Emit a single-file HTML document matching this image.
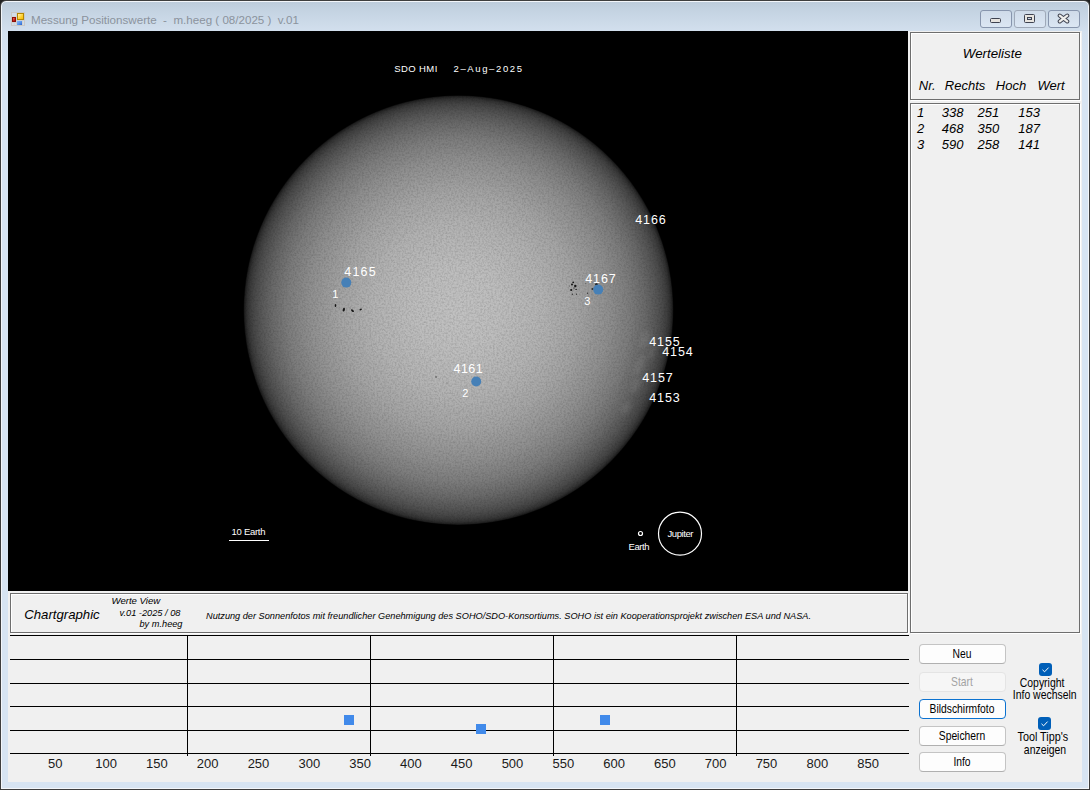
<!DOCTYPE html>
<html><head><meta charset="utf-8">
<style>
*{margin:0;padding:0;box-sizing:border-box}
html,body{width:1090px;height:790px;overflow:hidden;background:#222}
body{position:relative;font-family:"Liberation Sans",sans-serif}
.a{position:absolute}
#win{left:0;top:0;width:1090px;height:790px;background:linear-gradient(#bccbda 0,#c3d2e1 8px,#d3e0ee 31px,#d7e4f2 60px,#d7e4f2);border:1px solid #3e3e3e;border-radius:6px 6px 0 0;box-shadow:inset 0 0 0 1px #f3f6fa}
#tbar{left:0;top:0;width:1090px;height:31px;background:linear-gradient(#c3d2e2,#d9e5f2)}
#client{left:8px;top:31px;width:1074px;height:751px;background:#f0f0f0}
#img{left:8px;top:31px;width:900px;height:560px;background:#000;overflow:hidden}
.etch{border:1px solid #6e6e6e;box-shadow:1px 1px 0 #fff, inset 1px 1px 0 #fff}
.hl{height:2px;background:#000}
.vl{width:2px;background:#000}
.btn{border:1px solid #bcbcbc;border-radius:4px;background:#fdfdfd;font-size:12px;text-align:center;color:#000}
.wb{border:1px solid #8795ad;border-radius:3px;background:linear-gradient(#cfdbe9,#dbe6f3)}
.lbl{font-size:13px;color:#1e1e1e}
.sunt{color:#fff;font-size:11px;line-height:11px;white-space:nowrap}
.mono{font-family:"Liberation Mono",monospace;color:#fff;white-space:nowrap}
</style></head><body>
<div id="win" class="a"></div>
<!-- app icon -->
<svg class="a" style="left:11px;top:12px" width="14" height="14" viewBox="0 0 14 14">
<defs><linearGradient id="ig" x1="0" y1="0" x2="1" y2="1"><stop offset="0" stop-color="#fff6c8"/><stop offset="0.6" stop-color="#ffd02a"/><stop offset="1" stop-color="#f2b400"/></linearGradient>
<linearGradient id="ib" x1="0" y1="0" x2="1" y2="1"><stop offset="0" stop-color="#8ab8f4"/><stop offset="0.5" stop-color="#5c98ee"/><stop offset="1" stop-color="#2a62c8"/></linearGradient>
<linearGradient id="ir" x1="0" y1="0" x2="1" y2="1"><stop offset="0" stop-color="#f59090"/><stop offset="0.5" stop-color="#d82a20"/><stop offset="1" stop-color="#8a0a06"/></linearGradient></defs>
<rect x="0.5" y="0.5" width="13" height="13" fill="#d2dde9" stroke="#c9c8c6"/>
<path d="M5.5 0.5 V13.5 M0.5 5 H5.5 M0.5 10.5 H5.5 M3.2 10.5 V13.5 M11.5 8 V13.5 M5.5 8.5 H13.5" stroke="#cfcecb" stroke-width="0.8" fill="none"/>
<rect x="6.5" y="1.5" width="6" height="6" fill="url(#ig)" stroke="#b48700"/>
<rect x="1.5" y="5.5" width="3" height="4" fill="url(#ir)" stroke="#8e1008"/>
<rect x="6" y="9" width="5" height="4" fill="url(#ib)"/>
</svg>
<!-- window buttons -->
<div class="a wb" style="left:980px;top:10px;width:32px;height:18px"></div>
<div class="a wb" style="left:1014px;top:10px;width:32px;height:18px;border-color:#9fa9b8"></div>
<div class="a wb" style="left:1048px;top:10px;width:32px;height:18px"></div>
<div class="a" style="left:990px;top:18px;width:11px;height:5px;border:1px solid #3e4250;border-radius:1.5px;background:#e6e3df"></div>
<div class="a" style="left:1024px;top:14px;width:11px;height:9px;border:1px solid #3e4250;border-radius:1.5px;background:#e8e5e0"></div>
<div class="a" style="left:1027px;top:17px;width:5px;height:3px;border:1px solid #3e4250;background:#c9d6e6"></div>
<svg class="a" style="left:1057px;top:13px" width="13" height="11" viewBox="0 0 13 11"><path d="M2.8 2.6 L10.2 8.4 M10.2 2.6 L2.8 8.4" stroke="#3e4250" stroke-width="4.2" stroke-linecap="round"/><path d="M2.8 2.6 L10.2 8.4 M10.2 2.6 L2.8 8.4" stroke="#eeedeb" stroke-width="2.3" stroke-linecap="round"/></svg>

<div id="client" class="a"></div>
<div id="img" class="a">
<svg class="a" style="left:0;top:0" width="900" height="560" viewBox="0 0 900 560">
<defs>
<radialGradient id="ld" cx="450.5" cy="279.2" r="214.8" gradientUnits="userSpaceOnUse">
<stop offset="0" stop-color="#c1c1c1"/>
<stop offset="0.2" stop-color="#bdbdbd"/>
<stop offset="0.4" stop-color="#b2b2b2"/>
<stop offset="0.55" stop-color="#a4a4a4"/>
<stop offset="0.7" stop-color="#8f8f8f"/>
<stop offset="0.8" stop-color="#7c7c7c"/>
<stop offset="0.87" stop-color="#696969"/>
<stop offset="0.92" stop-color="#575757"/>
<stop offset="0.95" stop-color="#4a4a4a"/>
<stop offset="0.97" stop-color="#3e3e3e"/>
<stop offset="0.985" stop-color="#313131"/>
<stop offset="0.995" stop-color="#202020"/>
<stop offset="1.0" stop-color="#0e0e0e"/>
</radialGradient>
<filter id="nz" x="0" y="0" width="100%" height="100%">
<feTurbulence type="fractalNoise" baseFrequency="0.55" numOctaves="2" seed="3" result="t"/>
<feColorMatrix in="t" type="matrix" values="0 0 0 0 0  0 0 0 0 0  0 0 0 0 0  0.8 0 0 0 -0.3" result="d"/>
<feComposite in="d" in2="SourceGraphic" operator="in"/>
</filter>
<filter id="bl" x="-50%" y="-50%" width="200%" height="200%"><feGaussianBlur stdDeviation="2"/></filter>
</defs>
<circle cx="450.5" cy="279.2" r="214.8" fill="url(#ld)"/>
<circle cx="450.5" cy="279.2" r="214.3" fill="#000" filter="url(#nz)" opacity="0.35"/>
<g fill="#fff" filter="url(#bl)" opacity="0.07"><ellipse cx="637.0" cy="309.0" rx="5" ry="10" transform="rotate(20 637.0 309.0)"/><ellipse cx="632.0" cy="334.0" rx="4" ry="12" transform="rotate(25 632.0 334.0)"/><ellipse cx="644.0" cy="321.0" rx="3" ry="8" transform="rotate(15 644.0 321.0)"/><ellipse cx="628.0" cy="354.0" rx="4" ry="9" transform="rotate(30 628.0 354.0)"/><ellipse cx="618.0" cy="377.0" rx="4" ry="7" transform="rotate(35 618.0 377.0)"/></g>
<!-- sunspots -->
<g fill="#151515">
<ellipse cx="327.5" cy="274.5" rx="0.8" ry="1.6" transform="rotate(0 327.5 274.5)"/>
<ellipse cx="335.8" cy="278.7" rx="1.1" ry="1.9" transform="rotate(15 335.8 278.7)"/>
<ellipse cx="344.5" cy="279.7" rx="1.8" ry="0.9" transform="rotate(40 344.5 279.7)"/>
<ellipse cx="352.7" cy="278.5" rx="1.2" ry="0.8" transform="rotate(-20 352.7 278.5)"/>
<circle cx="565.2" cy="251.3" r="0.9"/>
<circle cx="567.3" cy="255.0" r="1.2"/>
<circle cx="564.0" cy="253.4" r="1"/>
<circle cx="563.2" cy="259.0" r="1.1"/>
<circle cx="568.1" cy="258.4" r="0.7"/>
<circle cx="564.4" cy="263.3" r="0.7" opacity="0.7"/>
<circle cx="568.5" cy="263.3" r="0.7" opacity="0.7"/>
<circle cx="579.5" cy="262.3" r="0.7" opacity="0.7"/>
<circle cx="577.8" cy="252.6" r="0.6" opacity="0.5"/>
<circle cx="566.0" cy="257.0" r="0.8" opacity="0.6"/>
<circle cx="561.5" cy="255.0" r="0.6" opacity="0.5"/>
<circle cx="588.5" cy="253.5" r="1.3"/>
<circle cx="584.5" cy="258.0" r="1.1" opacity="0.8"/>
<circle cx="428.0" cy="346.0" r="0.7" opacity="0.8"/>
<circle cx="439.0" cy="352.0" r="0.5" opacity="0.6"/>
</g>
<!-- markers -->
<g fill="#4680b7">
<circle cx="338.3" cy="251.6" r="5"/>
<circle cx="590.2" cy="258.6" r="5"/>
<circle cx="468.2" cy="350.5" r="5"/>
</g>
<!-- limb labels & scale -->
<g fill="none" stroke="#fff" stroke-width="1.2">
<circle cx="672" cy="502.7" r="21.5"/>
<circle cx="632.5" cy="502.5" r="2"/>
<line x1="221" y1="509.5" x2="261" y2="509.5"/>
</g>
<g id="suntxt" fill="#fff" font-family="Liberation Sans, sans-serif">
<text x="336.2" y="245.0" font-size="12.5" textLength="31.5" lengthAdjust="spacing">4165</text>
<text x="324.2" y="267.0" font-size="11">1</text>
<text x="577.2" y="252.0" font-size="12.5" textLength="30.5" lengthAdjust="spacing">4167</text>
<text x="576.2" y="274.0" font-size="11">3</text>
<text x="627.2" y="193.0" font-size="12.5" textLength="30.5" lengthAdjust="spacing">4166</text>
<text x="641.2" y="315.0" font-size="12.5" textLength="30.5" lengthAdjust="spacing">4155</text>
<text x="654.2" y="325.0" font-size="12.5" textLength="30.5" lengthAdjust="spacing">4154</text>
<text x="634.2" y="351.0" font-size="12.5" textLength="30.5" lengthAdjust="spacing">4157</text>
<text x="641.2" y="371.0" font-size="12.5" textLength="30.5" lengthAdjust="spacing">4153</text>
<text x="445.6" y="342.0" font-size="12.5" textLength="29" lengthAdjust="spacing">4161</text>
<text x="454.2" y="366.0" font-size="11">2</text>
</g>
<g id="idltxt" fill="#fff" font-family="Liberation Sans, sans-serif" font-size="9.5">
<text x="386.3" y="41" font-size="9.5" textLength="43" lengthAdjust="spacing">SDO HMI</text>
<text x="445.5" y="41" font-size="9.5" textLength="68.5" lengthAdjust="spacing">2&#8211;Aug&#8211;2025</text>
<text x="223.5" y="504.0" textLength="34" lengthAdjust="spacing">10 Earth</text>
<text x="620.5" y="519.0" textLength="21" lengthAdjust="spacing">Earth</text>
<text x="659.5" y="506.0" textLength="26" lengthAdjust="spacing">Jupiter</text>
</g>
</svg>
</div>

<!-- right panel -->
<div class="a etch" style="left:910px;top:32px;width:170px;height:68px"></div>
<div class="a etch" style="left:910px;top:103px;width:170px;height:530px"></div>

<!-- info box -->
<div class="a etch" style="left:10px;top:593px;width:898px;height:40px"></div>

<!-- chart -->

<div class="a" style="left:10px;top:635px;width:899px;height:1px;background:#000"></div>
<div class="a" style="left:10px;top:659px;width:899px;height:1px;background:#000"></div>
<div class="a" style="left:10px;top:683px;width:899px;height:1px;background:#000"></div>
<div class="a" style="left:10px;top:706px;width:899px;height:1px;background:#000"></div>
<div class="a" style="left:10px;top:730px;width:899px;height:1px;background:#000"></div>
<div class="a" style="left:10px;top:753px;width:899px;height:1px;background:#000"></div>
<div class="a" style="left:187px;top:635px;width:1px;height:121px;background:#000"></div>
<div class="a" style="left:370px;top:635px;width:1px;height:121px;background:#000"></div>
<div class="a" style="left:553px;top:635px;width:1px;height:121px;background:#000"></div>
<div class="a" style="left:736px;top:635px;width:1px;height:121px;background:#000"></div>
<div class="a" style="left:344px;top:715px;width:10px;height:10px;background:#418aea"></div>
<div class="a" style="left:476px;top:724px;width:10px;height:10px;background:#418aea"></div>
<div class="a" style="left:600px;top:715px;width:10px;height:10px;background:#418aea"></div>
<div class="a" style="left:919px;top:644px;width:87px;height:20px;border-radius:4px;border:1px solid #c4c4c4;border-bottom-color:#b0b0b0;background:#fdfdfd"></div>
<div class="a" style="left:919px;top:672px;width:87px;height:20px;border-radius:4px;border:1px solid #e4e4e4;background:#f6f6f6"></div>
<div class="a" style="left:919px;top:699px;width:87px;height:20px;border-radius:4px;border:1px solid #0b72d0;background:#fdfdfd"></div>
<div class="a" style="left:919px;top:726px;width:87px;height:20px;border-radius:4px;border:1px solid #c4c4c4;border-bottom-color:#b0b0b0;background:#fdfdfd"></div>
<div class="a" style="left:919px;top:752px;width:87px;height:20px;border-radius:4px;border:1px solid #c4c4c4;border-bottom-color:#b0b0b0;background:#fdfdfd"></div>
<div class="a" style="left:1039px;top:663px;width:13px;height:13px;border-radius:3px;background:#005fb8"></div>
<svg class="a" style="left:1039px;top:663px" width="13" height="13"><path d="M3.5 6.8 L5.6 8.8 L9.6 4.6" fill="none" stroke="#fff" stroke-width="1"/></svg>
<div class="a" style="left:1038px;top:717px;width:13px;height:13px;border-radius:3px;background:#005fb8"></div>
<svg class="a" style="left:1038px;top:717px" width="13" height="13"><path d="M3.5 6.8 L5.6 8.8 L9.6 4.6" fill="none" stroke="#fff" stroke-width="1"/></svg>
<svg class="a" style="left:0;top:0" width="1090" height="790" font-family="Liberation Sans, sans-serif">
<text x="31" y="24.3" font-size="11.6" font-style="normal" fill="#8b939d" text-anchor="start">Messung Positionswerte&#160; -&#160; m.heeg ( 08/2025 )&#160; v.01</text>
<text x="962.8" y="58.3" font-size="13.33" font-style="italic" fill="#000" text-anchor="start">Werteliste</text>
<text x="918.8" y="90" font-size="13" font-style="italic" fill="#000" text-anchor="start">Nr.</text>
<text x="944.8" y="90" font-size="13" font-style="italic" fill="#000" text-anchor="start">Rechts</text>
<text x="995.8" y="90" font-size="13" font-style="italic" fill="#000" text-anchor="start">Hoch</text>
<text x="1037.4" y="90" font-size="13" font-style="italic" fill="#000" text-anchor="start">Wert</text>
<text x="917" y="116.5" font-size="13" font-style="italic" fill="#000" text-anchor="start">1</text>
<text x="941.8" y="116.5" font-size="13" font-style="italic" fill="#000" text-anchor="start">338</text>
<text x="977.5" y="116.5" font-size="13" font-style="italic" fill="#000" text-anchor="start">251</text>
<text x="1018.3" y="116.5" font-size="13" font-style="italic" fill="#000" text-anchor="start">153</text>
<text x="917" y="132.5" font-size="13" font-style="italic" fill="#000" text-anchor="start">2</text>
<text x="941.8" y="132.5" font-size="13" font-style="italic" fill="#000" text-anchor="start">468</text>
<text x="977.5" y="132.5" font-size="13" font-style="italic" fill="#000" text-anchor="start">350</text>
<text x="1018.3" y="132.5" font-size="13" font-style="italic" fill="#000" text-anchor="start">187</text>
<text x="917" y="148.5" font-size="13" font-style="italic" fill="#000" text-anchor="start">3</text>
<text x="941.8" y="148.5" font-size="13" font-style="italic" fill="#000" text-anchor="start">590</text>
<text x="977.5" y="148.5" font-size="13" font-style="italic" fill="#000" text-anchor="start">258</text>
<text x="1018.3" y="148.5" font-size="13" font-style="italic" fill="#000" text-anchor="start">141</text>
<text x="24.2" y="618.6" font-size="13.2" font-style="italic" fill="#000" text-anchor="start">Chartgraphic</text>
<text x="111.5" y="603.7" font-size="9.6" font-style="italic" fill="#000" text-anchor="start">Werte View</text>
<text x="119.5" y="615.8" font-size="9.6" font-style="italic" fill="#000" text-anchor="start" textLength="61" lengthAdjust="spacingAndGlyphs">v.01 -2025 / 08</text>
<text x="139.5" y="627.4" font-size="9.6" font-style="italic" fill="#000" text-anchor="start" textLength="43" lengthAdjust="spacingAndGlyphs">by m.heeg</text>
<text x="206" y="619" font-size="9.17" font-style="italic" fill="#000" text-anchor="start" textLength="605" lengthAdjust="spacingAndGlyphs">Nutzung der Sonnenfotos mit freundlicher Genehmigung des SOHO/SDO-Konsortiums. SOHO ist ein Kooperationsprojekt zwischen ESA und NASA.</text>
<text x="55.3" y="767.9" font-size="13" font-style="normal" fill="#1a1a1a" text-anchor="middle">50</text>
<text x="106.1" y="767.9" font-size="13" font-style="normal" fill="#1a1a1a" text-anchor="middle">100</text>
<text x="156.9" y="767.9" font-size="13" font-style="normal" fill="#1a1a1a" text-anchor="middle">150</text>
<text x="207.7" y="767.9" font-size="13" font-style="normal" fill="#1a1a1a" text-anchor="middle">200</text>
<text x="258.5" y="767.9" font-size="13" font-style="normal" fill="#1a1a1a" text-anchor="middle">250</text>
<text x="309.3" y="767.9" font-size="13" font-style="normal" fill="#1a1a1a" text-anchor="middle">300</text>
<text x="360.1" y="767.9" font-size="13" font-style="normal" fill="#1a1a1a" text-anchor="middle">350</text>
<text x="410.9" y="767.9" font-size="13" font-style="normal" fill="#1a1a1a" text-anchor="middle">400</text>
<text x="461.7" y="767.9" font-size="13" font-style="normal" fill="#1a1a1a" text-anchor="middle">450</text>
<text x="512.5" y="767.9" font-size="13" font-style="normal" fill="#1a1a1a" text-anchor="middle">500</text>
<text x="563.3" y="767.9" font-size="13" font-style="normal" fill="#1a1a1a" text-anchor="middle">550</text>
<text x="614.1" y="767.9" font-size="13" font-style="normal" fill="#1a1a1a" text-anchor="middle">600</text>
<text x="664.9" y="767.9" font-size="13" font-style="normal" fill="#1a1a1a" text-anchor="middle">650</text>
<text x="715.7" y="767.9" font-size="13" font-style="normal" fill="#1a1a1a" text-anchor="middle">700</text>
<text x="766.5" y="767.9" font-size="13" font-style="normal" fill="#1a1a1a" text-anchor="middle">750</text>
<text x="817.3" y="767.9" font-size="13" font-style="normal" fill="#1a1a1a" text-anchor="middle">800</text>
<text x="868.1" y="767.9" font-size="13" font-style="normal" fill="#1a1a1a" text-anchor="middle">850</text>
<text x="963" y="657.6" font-size="12" font-style="normal" fill="#000" text-anchor="middle" transform="translate(962 0) scale(0.86 1) translate(-963 0)">Neu</text>
<text x="963" y="685.6" font-size="12" font-style="normal" fill="#a3a3a3" text-anchor="middle" transform="translate(962 0) scale(0.86 1) translate(-963 0)">Start</text>
<text x="963" y="712.6" font-size="12" font-style="normal" fill="#000" text-anchor="middle" transform="translate(962 0) scale(0.86 1) translate(-963 0)">Bildschirmfoto</text>
<text x="963" y="739.6" font-size="12" font-style="normal" fill="#000" text-anchor="middle" transform="translate(962 0) scale(0.86 1) translate(-963 0)">Speichern</text>
<text x="963" y="765.6" font-size="12" font-style="normal" fill="#000" text-anchor="middle" transform="translate(962 0) scale(0.86 1) translate(-963 0)">Info</text>
<text x="1042.1" y="687" font-size="12" font-style="normal" fill="#000" text-anchor="middle" transform="translate(1042.1 0) scale(0.87 1) translate(-1042.1 0)">Copyright</text>
<text x="1044.7" y="699.4" font-size="12" font-style="normal" fill="#000" text-anchor="middle" transform="translate(1044.7 0) scale(0.87 1) translate(-1044.7 0)">Info wechseln</text>
<text x="1043.75" y="740.7" font-size="12" font-style="normal" fill="#000" text-anchor="middle" transform="translate(1043.75 0) scale(0.9 1) translate(-1044.75 0)">Tool Tipp's</text>
<text x="1045" y="753.6" font-size="12" font-style="normal" fill="#000" text-anchor="middle" transform="translate(1045 0) scale(0.87 1) translate(-1045 0)">anzeigen</text>
</svg>
</body></html>
